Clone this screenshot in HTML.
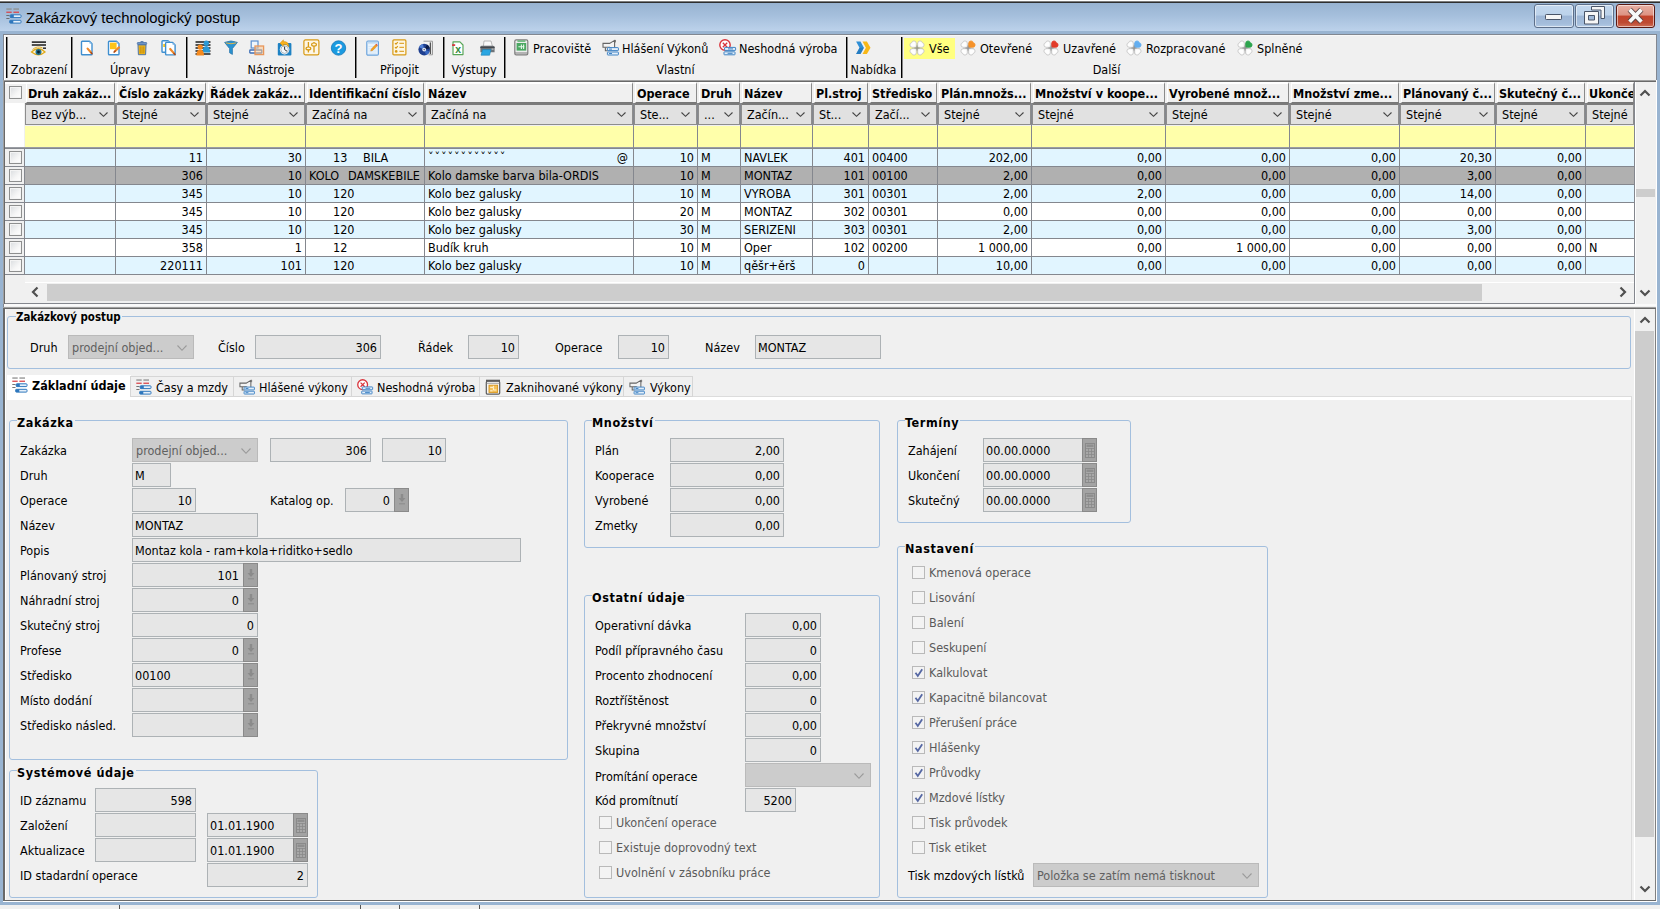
<!DOCTYPE html><html lang="cs"><head><meta charset="utf-8"><title>Zakázkový technologický postup</title><style>
*{box-sizing:border-box;margin:0;padding:0}
html,body{width:1660px;height:909px;overflow:hidden;background:#f0f0f0}
body{position:relative;font-family:"DejaVu Sans Condensed","Liberation Sans",sans-serif;font-size:12.5px;color:#000;line-height:1}
.a{position:absolute}
.t{position:absolute;white-space:nowrap;line-height:16px;height:16px}
.b{font-weight:bold}
.f{position:absolute;background:#e6e6e6;border:1px solid #adb2b5;height:24px;line-height:22px;white-space:nowrap;overflow:hidden;padding:1px 3px 0 2px}
.r{text-align:right}
.cb{position:absolute;background:#cccccc;border:1px solid #bababa;height:24px;line-height:22px;white-space:nowrap;overflow:hidden;padding:1px 4px 0 3px;color:#606060}
.gb{position:absolute;border:1px solid #a3bfde;border-radius:3px}
.gt{position:absolute;white-space:nowrap;font-weight:bold;font-size:12.5px;line-height:16px;background:#f0f0f0;padding:0 1px 0 0;letter-spacing:.6px}
.ck{position:absolute;width:13px;height:13px;background:#f3f3f3;border:1px solid #b9b9b9}
.ckl{position:absolute;white-space:nowrap;line-height:16px;color:#5a5a5a}
.sb{position:absolute;width:15px;height:24px;background:#a3a3a3;border:1px solid #8a8a8a}
.hd{position:absolute;top:82px;height:21px;background:#f0f0f0;border:1px solid;border-top-width:2px;border-color:#fff #8a8a8a #777 #fff;font-weight:bold;font-size:12.5px;line-height:19px;padding:0 0 0 1px;white-space:nowrap;overflow:hidden}
.fl{position:absolute;top:103px;height:22px;background:#e1e1e1;border:1px solid #8d8d8d;border-top:2px solid #7a7a7a;line-height:19px;padding:0 5px;white-space:nowrap;overflow:hidden}
.yl{position:absolute;top:126px;height:21px;background:#ffffaa}
.c{position:absolute;height:17px;line-height:17px;white-space:nowrap;overflow:hidden;padding:0 3px}
.vl{position:absolute;width:1px;background:#84878e}
.hl{position:absolute;height:1px;background:#84878e}
.sep{position:absolute;top:37px;width:1px;height:41px;background:#000;box-shadow:1px 0 0 rgba(0,0,0,.45)}
.tl{position:absolute;white-space:nowrap;line-height:16px;height:16px;top:62px;text-align:center}
.tb{position:absolute;white-space:nowrap;line-height:16px;height:16px;top:41px}
svg{position:absolute;overflow:visible}
</style></head><body>
<div class="a" style="left:0;top:0;width:1660px;height:909px;background:#99b4d1"></div>
<div class="a" style="left:0;top:0;width:1660px;height:1px;background:#fff"></div>
<div class="a" style="left:0;top:1px;width:1660px;height:1px;background:#7c7c7c"></div>
<div class="a" style="left:0;top:2px;width:1660px;height:1px;background:#2e2e2e"></div>
<div class="a" style="left:0;top:3px;width:1660px;height:28px;background:linear-gradient(#98b3d1,#a5bfdc 45%,#bcd2eb)"></div>
<div class="a" style="left:3px;top:34px;width:1654px;height:868px;background:#f0f0f0;border:1px solid #828790;border-bottom:none;border-right-color:#fff"></div>
<div class="a" style="left:4px;top:35px;width:1652px;height:1px;background:#f8f8f8"></div>
<div class="a" style="left:4px;top:35px;width:1px;height:45px;background:#fff"></div>
<div class="a" style="left:1656px;top:34px;width:1px;height:47px;background:#828790"></div>
<div class="a" style="left:0;top:905px;width:1660px;height:4px;background:#f0f0f0"></div>
<div class="a" style="left:119px;top:905px;width:1px;height:4px;background:#555"></div>
<div class="a" style="left:360px;top:905px;width:1px;height:4px;background:#555"></div>
<div class="a" style="left:399px;top:905px;width:1px;height:4px;background:#555"></div>
<div class="a" style="left:479px;top:905px;width:1px;height:4px;background:#555"></div>
<div class="t" style="left:26px;top:9px;font-family:'Liberation Sans',sans-serif;font-size:14.9px;line-height:18px;height:18px">Zakázkový technologický postup</div>
<svg style="left:6px;top:8px" width="16" height="16" viewBox="0 0 16 16"><rect x="0.3" y="0.4" width="5.4" height="1.3" fill="#8f8f8f"/><rect x="7.4" y="0.4" width="5.600" height="1.3" fill="#8f8f8f"/><rect x="0.3" y="3.600" width="5.4" height="1.3" fill="#d9474d"/><rect x="7.4" y="3.600" width="5.600" height="1.3" fill="#d9474d"/><rect x="0.3" y="7.100" width="3.200" height=".9" fill="#666"/><rect x="0.3" y="10.100" width="3.200" height=".9" fill="#666"/><rect x="4.200" y="6.800" width="10.800" height="2.800" rx=".8" fill="#e6f0fa" stroke="#2e77bd" stroke-width="1"/><rect x="4.200" y="6.800" width="3.600" height="2.800" fill="#2e77bd"/><rect x="3.700" y="12.300" width="11.300" height="2.800" rx=".8" fill="#e6f0fa" stroke="#2e77bd" stroke-width="1"/><rect x="3.700" y="12.300" width="3.600" height="2.800" fill="#2e77bd"/></svg>
<div class="a" style="left:1534px;top:4px;width:40px;height:24px;border:1px solid #5d6f8a;border-radius:3px;background:linear-gradient(#c3d7ee 0%,#bcd2ea 46%,#9db6d6 50%,#a4bddb 85%,#b4cbe6 100%);box-shadow:inset 0 0 0 1px rgba(255,255,255,.55)"></div>
<div class="a" style="left:1575px;top:4px;width:39px;height:24px;border:1px solid #5d6f8a;border-radius:3px;background:linear-gradient(#c3d7ee 0%,#bcd2ea 46%,#9db6d6 50%,#a4bddb 85%,#b4cbe6 100%);box-shadow:inset 0 0 0 1px rgba(255,255,255,.55)"></div>
<div class="a" style="left:1616px;top:4px;width:39px;height:24px;border:1px solid #5a1a14;border-radius:3px;background:linear-gradient(#e8b0a4 0%,#dd9383 46%,#c3432b 50%,#bd4a32 80%,#cf6e56 100%);box-shadow:inset 0 0 0 1px rgba(255,255,255,.55)"></div>
<svg style="left:1534px;top:4px" width="39" height="24" viewBox="0 0 39 24"><rect x="11.500" y="10.500" width="16" height="5" rx=".8" fill="#f6f6f6" stroke="#4a5568" stroke-width="1"/></svg>
<svg style="left:1576px;top:4px" width="39" height="24" viewBox="0 0 39 24"><path d="M15.500 2.500h13v12h-3.500v-8.500h-9.500z" fill="#f6f6f6" stroke="#4a5568" stroke-width="1"/><path d="M8.500 7.500h14v12.500h-14zM12.500 11.500v4.500h6v-4.500z" fill="#f6f6f6" fill-rule="evenodd" stroke="#4a5568" stroke-width="1"/></svg>
<svg style="left:1616px;top:4px" width="40" height="24" viewBox="0 0 40 24"><path d="M13.600 5.600L25.400 17.800M25.400 5.600L13.600 17.800" stroke="#5a4040" stroke-width="5.600" stroke-linecap="butt"/><path d="M13.600 5.600L25.400 17.800M25.400 5.600L13.600 17.800" stroke="#f8f8f8" stroke-width="3.800" stroke-linecap="butt"/></svg>
<div class="sep" style="left:6px"></div>
<div class="sep" style="left:71px"></div>
<div class="sep" style="left:186px"></div>
<div class="sep" style="left:355px"></div>
<div class="sep" style="left:443px"></div>
<div class="sep" style="left:504px"></div>
<div class="sep" style="left:846px"></div>
<div class="sep" style="left:901px"></div>
<svg style="left:31px;top:40.7px" width="16" height="16" viewBox="0 0 16 16"><rect x="0.800" y="0.400" width="14.200" height="1.400" fill="#0c0c0c"/><rect x="0.800" y="3.300" width="14.200" height="1.400" fill="#0c0c0c"/><rect x="12" y="6.500" width="3" height="1.300" fill="#0c0c0c"/><path d="M0.500 11 Q7.500 4.500 14 11 Q7.500 16.500 0.500 11Z" fill="#fff6d8" stroke="#e0aa1a" stroke-width="1.300"/><path d="M1.500 8.500Q6 4.500 11.500 6.800" fill="none" stroke="#e0aa1a" stroke-width=".9"/><circle cx="7.5" cy="11" r="3" fill="#1f6f8f"/><circle cx="7.5" cy="11" r="1.4" fill="#0b2230"/></svg>
<div class="tl" style="left:-6.0px;width:90px">Zobrazení</div>
<svg style="left:80px;top:40px" width="16" height="16" viewBox="0 0 16 16"><path d="M2.3 1.2h7.2l2.500 2.500v10.2q0 .8 -.8 .8h-8.9q-.8 0 -.8 -.8v-11.9q0 -.8 .8 -.8z" fill="#fff" stroke="#3f8fd0" stroke-width="1.400" stroke-linejoin="round"/><path d="M9.5 1.2v2.500h2.500z" fill="#8fc0ea"/><path d="M7.6 8.6l3.4 3.9" stroke="#f0892b" stroke-width="2.200" stroke-linecap="round"/><path d="M11.0 12.5l1.05 1.21" stroke="#a8481a" stroke-width="1.500" stroke-linecap="round"/></svg>
<svg style="left:107px;top:40px" width="16" height="16" viewBox="0 0 16 16"><path d="M2.3 1.2h7.2l2.500 2.500v10.2q0 .8 -.8 .8h-8.9q-.8 0 -.8 -.8v-11.9q0 -.8 .8 -.8z" fill="#fff" stroke="#3f8fd0" stroke-width="1.400" stroke-linejoin="round"/><path d="M9.5 1.2v2.500h2.500z" fill="#8fc0ea"/><path d="M3 2.600h6.600v6.600h-6.600z" fill="#fcc419"/><path d="M12 7.4l-3.8 3.6" stroke="#f0892b" stroke-width="2.200" stroke-linecap="round"/><path d="M8.2 11.0l-1.16 1.10" stroke="#a8481a" stroke-width="1.500" stroke-linecap="round"/></svg>
<svg style="left:135px;top:40px" width="16" height="16" viewBox="0 0 16 16"><path d="M5.500 2.400 Q7 .600 8.500 2.400" fill="none" stroke="#4d74a8" stroke-width="1.200"/><rect x="2.300" y="2.500" width="9.400" height="2" rx=".6" fill="#6f93c4" stroke="#4d74a8" stroke-width=".8"/><path d="M3 4.900h8l-.4 9.800h-7.200z" fill="#f3b91f" stroke="#4d74a8" stroke-width="1"/><path d="M5.200 6.400v7M7 6.400v7M8.800 6.400v7" stroke="#c08a0a" stroke-width=".9"/></svg>
<svg style="left:161px;top:40px" width="16" height="16" viewBox="0 0 16 16"><path d="M1.8 0.8h5.2l2.500 2.500v8.2q0 .8 -.8 .8h-6.9q-.8 0 -.8 -.8v-9.9q0 -.8 .8 -.8z" fill="#fff" stroke="#3f8fd0" stroke-width="1.400" stroke-linejoin="round"/><path d="M7.0 0.8v2.500h2.500z" fill="#8fc0ea"/><rect x="2.2" y="4" width="2.4" height="3" fill="#fcc419"/><path d="M5.3999999999999995 2.4h6.2l2.500 2.500v9.2q0 .8 -.8 .8h-7.9q-.8 0 -.8 -.8v-10.9q0 -.8 .8 -.8z" fill="#fff" stroke="#3f8fd0" stroke-width="1.400" stroke-linejoin="round"/><path d="M11.6 2.4v2.500h2.500z" fill="#8fc0ea"/><path d="M9.2 9l3.8 4.4" stroke="#f0892b" stroke-width="2.200" stroke-linecap="round"/><path d="M13.0 13.4l1.05 1.21" stroke="#a8481a" stroke-width="1.500" stroke-linecap="round"/></svg>
<div class="tl" style="left:85.0px;width:90px">Úpravy</div>
<svg style="left:195px;top:40px" width="17" height="16" viewBox="0 0 17 16"><path d="M0.5 2h15M0.5 5h15M0.5 8h15M0.5 11h15M0.5 14h15" stroke="#1e1e1e" stroke-width="1.4"/><circle cx="11.3" cy="3.2" r="2.6" fill="#2b9ad6"/><path d="M7.6 12.5 Q7.6 6 11.3 6 Q15 6 15 12.5z" fill="#2b9ad6"/><circle cx="5.2" cy="7" r="2.6" fill="#f58a1f"/><path d="M1.4 15.6 Q1.4 9.6 5.2 9.6 Q9 9.6 9 15.6z" fill="#f58a1f"/></svg>
<svg style="left:224px;top:40px" width="14" height="16" viewBox="0 0 14 16"><path d="M0.6 2.4 Q7 -0.6 13.4 2.4 L8.4 8.6 V14.4 L5.6 12.8 V8.6z" fill="#2b93d1" stroke="#1c6fa6" stroke-width=".7"/><path d="M1.8 2.9 Q7 4.6 12.2 2.9" fill="none" stroke="#e2b44a" stroke-width="1"/></svg>
<svg style="left:249px;top:40px" width="16" height="16" viewBox="0 0 16 16"><rect x="2.2" y="1" width="6.8" height="7" fill="#eef5fc" stroke="#5b8fd0" stroke-width="1.2"/><rect x="0.8" y="10" width="12" height="3" rx=".6" fill="#fff" stroke="#3d6fb6" stroke-width="1.3"/><rect x="6" y="6" width="8.6" height="8.6" fill="rgba(250,200,150,.55)" stroke="#e8965a" stroke-width="1.3"/></svg>
<svg style="left:277px;top:39px" width="16" height="17" viewBox="0 0 16 17"><rect x="0.8" y="4" width="13.6" height="12.4" rx="1" fill="#1e82c4"/><circle cx="7.6" cy="10.6" r="4.8" fill="#fff"/><circle cx="7.6" cy="10.6" r="3.8" fill="#f4f8fb" stroke="#7a8a96" stroke-width=".6"/><path d="M7.6 10.6V7.6M7.6 10.6l2.4 1.6" stroke="#333" stroke-width="1"/><path d="M6.4 0.8l-3.4 3.4l3.4 3v-1.8q3.6 -.4 5.4 2.6q.2 -5.6 -5.4 -5.4z" fill="#f9b21c" stroke="#d48806" stroke-width=".5"/></svg>
<svg style="left:303px;top:39px" width="17" height="17" viewBox="0 0 17 17"><rect x="0.9" y="0.9" width="15" height="15" rx="1.6" fill="#fdf6e6" stroke="#d79a14" stroke-width="1.2"/><path d="M5.4 3v10.6M11 3v10.6" stroke="#d79a14" stroke-width="1.3"/><ellipse cx="5.4" cy="9.4" rx="2.4" ry="1.4" fill="#fdf6e6" stroke="#d79a14" stroke-width="1.2"/><ellipse cx="11" cy="5.6" rx="2.4" ry="1.6" fill="#fdf6e6" stroke="#d79a14" stroke-width="1.2"/></svg>
<svg style="left:331px;top:40px" width="16" height="16" viewBox="0 0 16 16"><circle cx="7.500" cy="8" r="7.200" fill="#1b9ae0"/><circle cx="7.500" cy="8" r="7.200" fill="none" stroke="#1576b8" stroke-width=".8"/><text x="7.600" y="12.600" text-anchor="middle" font-family="Liberation Sans,sans-serif" font-weight="bold" font-size="13" fill="#fff">?</text></svg>
<div class="tl" style="left:226.0px;width:90px">Nástroje</div>
<svg style="left:366px;top:40px" width="14" height="16" viewBox="0 0 14 16"><rect x="0.8" y="1.2" width="11.6" height="14" rx="1.2" fill="#e9f3fc" stroke="#6aa2dc" stroke-width="1.2"/><rect x="1.4" y="1.6" width="10.4" height="2" fill="#bfd9f2"/><path d="M2.5 6.5h8M2.5 8.8h8M2.5 11h8M2.5 13.2h8" stroke="#cfe2f5" stroke-width=".8"/><path d="M9.600 4.600l1.500 1.500l-4.400 4.400l-2 .600l.600 -2z" fill="#f6a21e" stroke="#c8741a" stroke-width=".4"/><path d="M9.600 4.600l1.500 1.500l.8 -.8l-1.500 -1.500z" fill="#e24c3c"/></svg>
<svg style="left:392px;top:39px" width="15" height="17" viewBox="0 0 15 17"><rect x="0.9" y="0.9" width="13" height="15" rx="1" fill="#fdf6e4" stroke="#d79a14" stroke-width="1.2"/><path d="M3 4.2l1 1l1.8 -2M3 8.2l1 1l1.8 -2" fill="none" stroke="#d79a14" stroke-width="1.2"/><circle cx="4.2" cy="12.4" r="1.3" fill="#d79a14"/><path d="M7.4 4.4h4.6M7.4 8.4h4.6M7.4 12.4h4.6" stroke="#dfa93a" stroke-width="1.4"/></svg>
<svg style="left:418px;top:40px" width="16" height="16" viewBox="0 0 16 16"><path d="M5.5 1.2h9v13.6h-4" fill="#f4f4f4" stroke="#9a9a9a" stroke-width="1"/><path d="M12.4 2.4v11.6" stroke="#555" stroke-width="1.4"/><circle cx="6.2" cy="9.6" r="5.8" fill="#1f3f8f"/><path d="M6.2 9.6L1 7.2A5.8 5.8 0 0 1 5 4z" fill="#4f7fd6"/><path d="M6.2 9.6L11.6 11.6A5.8 5.8 0 0 1 8 15z" fill="#3767c2"/><path d="M6.2 9.6L9 4.6A5.8 5.8 0 0 1 11.9 8.6z" fill="#0b1c4a"/><circle cx="6.2" cy="9.6" r="1.9" fill="#e9edf5"/><circle cx="6.2" cy="9.6" r=".8" fill="#5a6a8a"/></svg>
<div class="tl" style="left:354.5px;width:90px">Připojit</div>
<svg style="left:452px;top:41.3px" width="12" height="14.5" viewBox="0 0 13 16"><path d="M1 1h7.600l3.400 3.400v10.600h-11z" fill="#fff" stroke="#56a556" stroke-width="1.300" stroke-linejoin="round"/><rect x="0" y="3.600" width="3.400" height="1.800" fill="#d8282f"/><text x="6.600" y="13.600" text-anchor="middle" font-family="Liberation Sans,sans-serif" font-weight="bold" font-size="11.500" fill="#2f8a3a">x</text></svg>
<svg style="left:479px;top:40px" width="17" height="16" viewBox="0 0 17 16"><path d="M5 1h7l1.4 5.4h-9z" fill="#fafafa" stroke="#a8a8a8" stroke-width=".8"/><path d="M1.4 7.2q0 -1.4 1.4 -1.4h11.2q1.6 0 1.6 1.6v4.8h-14.2z" fill="#6f7479"/><path d="M1.4 7.4h14.2" stroke="#44494d" stroke-width="1.4"/><path d="M3.6 9.6h8.4l-1.4 5.6h-8.6z" fill="#2aa6e2" stroke="#1c7fb2" stroke-width=".6"/><rect x="12.6" y="8.6" width="2" height="1" fill="#c9ced2"/></svg>
<div class="tl" style="left:429.0px;width:90px">Výstupy</div>
<svg style="left:514px;top:39px" width="15" height="17" viewBox="0 0 15 17"><rect x="0.8" y="0.8" width="13" height="15" rx="1.4" fill="#ececec" stroke="#7d7d7d" stroke-width="1.2"/><path d="M1 14h12.6" stroke="#7d7d7d" stroke-width="1"/><rect x="3.4" y="1.4" width="8" height="1.4" fill="#5ab46e"/><rect x="2.6" y="4" width="9.6" height="7.6" fill="#4aa862"/><path d="M4.4 7.8h6M7.4 5.6v4.4M9.6 5.6v4.4" stroke="#e6f5ea" stroke-width="1.1"/></svg>
<div class="tb" style="left:533px">Pracoviště</div>
<svg style="left:602px;top:39px" width="17" height="17" viewBox="0 0 17 17"><path d="M1 4.400h6.600l5 -3v9.400l-5 -2.600h-6.600z" fill="#f4f4f4" stroke="#666" stroke-width="1.100"/><path d="M3.400 8.400v3.400h2.600" fill="none" stroke="#666" stroke-width="1.100"/><path d="M13.400 1v2.400" stroke="#666" stroke-width=".9"/><rect x="5.4" y="8.6" width="11" height="3" rx=".5" fill="#e4effa" stroke="#3f83c4" stroke-width="1"/><rect x="5.4" y="13" width="11" height="3" rx=".5" fill="#e4effa" stroke="#3f83c4" stroke-width="1"/><path d="M7 10.1h3M7 14.5h3" stroke="#3f83c4" stroke-width="1"/></svg>
<div class="tb" style="left:622px">Hlášení Výkonů</div>
<svg style="left:719px;top:39px" width="17" height="17" viewBox="0 0 17 17"><circle cx="6" cy="6" r="5.200" fill="#fff" stroke="#d9343c" stroke-width="1.400"/><path d="M3.800 3.800l4.400 4.400M8.200 3.800l-4.400 4.400" stroke="#d9343c" stroke-width="1.300"/><rect x="5.6" y="8.4" width="11" height="3" rx=".5" fill="#e4effa" stroke="#3f83c4" stroke-width="1"/><rect x="5" y="12.8" width="11" height="3" rx=".5" fill="#e4effa" stroke="#3f83c4" stroke-width="1"/><path d="M9 9.9h5M8.6 14.3h5" stroke="#3f83c4" stroke-width="1"/></svg>
<div class="tb" style="left:739px">Neshodná výroba</div>
<div class="tl" style="left:630.5px;width:90px">Vlastní</div>
<svg style="left:855px;top:41px" width="17" height="14" viewBox="0 0 16 14"><path d="M0.6 0.6h4.4l3.4 6.2l-3.4 6.2h-4.4l3.4 -6.2z" fill="#2f8fd6"/><path d="M0.6 6.8h3.4l-3.4 6.2h4.4l3.4 -6.2z" fill="#1f6fb2" opacity=".55"/><path d="M7 0.6h4.4l3.6 6.2l-3.6 6.2h-4.4l3.4 -6.2z" fill="#f8b818"/></svg>
<div class="tl" style="left:828.5px;width:90px">Nabídka</div>
<div class="a" style="left:904px;top:38px;width:51px;height:21px;background:#ffff80"></div>
<svg style="left:909px;top:40px" width="16" height="16" viewBox="0 0 16 16"><g opacity=".35"><path d="M8.300 3v10.600M3 8.300h10.600" stroke="#555" stroke-width="1"/></g><path d="M7.300 7.300V3.600Q7.300 .900 5 .900Q3.100 .900 2.700 2.700Q.900 3.100 .900 5Q.900 7.300 3.600 7.300z" transform="" fill="#fefefe" stroke="#c2c2c2" stroke-width=".8"/><path d="M7.300 7.300V3.600Q7.300 .900 5 .900Q3.100 .900 2.700 2.700Q.900 3.100 .900 5Q.900 7.300 3.600 7.300z" transform="translate(16,0) scale(-1,1)" fill="#fefefe" stroke="#c2c2c2" stroke-width=".8"/><path d="M7.300 7.300V3.600Q7.300 .900 5 .900Q3.100 .900 2.700 2.700Q.900 3.100 .900 5Q.900 7.300 3.600 7.300z" transform="translate(0,16) scale(1,-1)" fill="#fefefe" stroke="#c2c2c2" stroke-width=".8"/><path d="M7.300 7.300V3.600Q7.300 .900 5 .900Q3.100 .900 2.700 2.700Q.900 3.100 .900 5Q.900 7.300 3.600 7.300z" transform="translate(16,16) scale(-1,-1)" fill="#fefefe" stroke="#c2c2c2" stroke-width=".8"/><path d="M8 5.500v5M5.500 8h5" stroke="#8a8a8a" stroke-width=".9"/></svg>
<div class="tb" style="left:929px">Vše</div>
<svg style="left:960px;top:40px" width="16" height="16" viewBox="0 0 16 16"><g opacity=".35"><path d="M8.300 3v10.600M3 8.300h10.600" stroke="#555" stroke-width="1"/></g><path d="M7.300 7.300V3.600Q7.300 .900 5 .900Q3.100 .900 2.700 2.700Q.900 3.100 .900 5Q.900 7.300 3.600 7.300z" transform="" fill="#fefefe" stroke="#c2c2c2" stroke-width=".8"/><path d="M7.300 7.300V3.600Q7.300 .900 5 .900Q3.100 .900 2.700 2.700Q.900 3.100 .900 5Q.900 7.300 3.600 7.300z" transform="translate(16,0) scale(-1,1)" fill="#f5922a" stroke="#f5922a" stroke-width=".8"/><path d="M7.300 7.300V3.600Q7.300 .900 5 .900Q3.100 .900 2.700 2.700Q.900 3.100 .900 5Q.900 7.300 3.600 7.300z" transform="translate(0,16) scale(1,-1)" fill="#fefefe" stroke="#c2c2c2" stroke-width=".8"/><path d="M7.300 7.300V3.600Q7.300 .900 5 .900Q3.100 .900 2.700 2.700Q.900 3.100 .900 5Q.900 7.300 3.600 7.300z" transform="translate(16,16) scale(-1,-1)" fill="#fefefe" stroke="#c2c2c2" stroke-width=".8"/><path d="M8 5.500v5M5.500 8h5" stroke="#8a8a8a" stroke-width=".9"/></svg>
<div class="tb" style="left:980px">Otevřené</div>
<svg style="left:1043px;top:40px" width="16" height="16" viewBox="0 0 16 16"><g opacity=".35"><path d="M8.300 3v10.600M3 8.300h10.600" stroke="#555" stroke-width="1"/></g><path d="M7.300 7.300V3.600Q7.300 .900 5 .900Q3.100 .900 2.700 2.700Q.900 3.100 .900 5Q.900 7.300 3.600 7.300z" transform="" fill="#fefefe" stroke="#c2c2c2" stroke-width=".8"/><path d="M7.300 7.300V3.600Q7.300 .900 5 .900Q3.100 .900 2.700 2.700Q.900 3.100 .900 5Q.900 7.300 3.600 7.300z" transform="translate(16,0) scale(-1,1)" fill="#e23a28" stroke="#e23a28" stroke-width=".8"/><path d="M7.300 7.300V3.600Q7.300 .900 5 .900Q3.100 .900 2.700 2.700Q.900 3.100 .900 5Q.900 7.300 3.600 7.300z" transform="translate(0,16) scale(1,-1)" fill="#fefefe" stroke="#c2c2c2" stroke-width=".8"/><path d="M7.300 7.300V3.600Q7.300 .900 5 .900Q3.100 .900 2.700 2.700Q.900 3.100 .900 5Q.900 7.300 3.600 7.300z" transform="translate(16,16) scale(-1,-1)" fill="#fefefe" stroke="#c2c2c2" stroke-width=".8"/><path d="M8 5.500v5M5.500 8h5" stroke="#8a8a8a" stroke-width=".9"/></svg>
<div class="tb" style="left:1063px">Uzavřené</div>
<svg style="left:1126px;top:40px" width="16" height="16" viewBox="0 0 16 16"><g opacity=".35"><path d="M8.300 3v10.600M3 8.300h10.600" stroke="#555" stroke-width="1"/></g><path d="M7.300 7.300V3.600Q7.300 .900 5 .900Q3.100 .900 2.700 2.700Q.900 3.100 .900 5Q.900 7.300 3.600 7.300z" transform="" fill="#fefefe" stroke="#c2c2c2" stroke-width=".8"/><path d="M7.300 7.300V3.600Q7.300 .900 5 .900Q3.100 .900 2.700 2.700Q.900 3.100 .900 5Q.900 7.300 3.600 7.300z" transform="translate(16,0) scale(-1,1)" fill="#63aef0" stroke="#63aef0" stroke-width=".8"/><path d="M7.300 7.300V3.600Q7.300 .900 5 .900Q3.100 .900 2.700 2.700Q.900 3.100 .900 5Q.900 7.300 3.600 7.300z" transform="translate(0,16) scale(1,-1)" fill="#fefefe" stroke="#c2c2c2" stroke-width=".8"/><path d="M7.300 7.300V3.600Q7.300 .900 5 .900Q3.100 .900 2.700 2.700Q.900 3.100 .900 5Q.900 7.300 3.600 7.300z" transform="translate(16,16) scale(-1,-1)" fill="#fefefe" stroke="#c2c2c2" stroke-width=".8"/><path d="M8 5.500v5M5.500 8h5" stroke="#8a8a8a" stroke-width=".9"/></svg>
<div class="tb" style="left:1146px">Rozpracované</div>
<svg style="left:1237px;top:40px" width="16" height="16" viewBox="0 0 16 16"><g opacity=".35"><path d="M8.300 3v10.600M3 8.300h10.600" stroke="#555" stroke-width="1"/></g><path d="M7.300 7.300V3.600Q7.300 .900 5 .900Q3.100 .900 2.700 2.700Q.900 3.100 .900 5Q.900 7.300 3.600 7.300z" transform="" fill="#fefefe" stroke="#c2c2c2" stroke-width=".8"/><path d="M7.300 7.300V3.600Q7.300 .900 5 .900Q3.100 .900 2.700 2.700Q.900 3.100 .900 5Q.900 7.300 3.600 7.300z" transform="translate(16,0) scale(-1,1)" fill="#2da44e" stroke="#2da44e" stroke-width=".8"/><path d="M7.300 7.300V3.600Q7.300 .900 5 .900Q3.100 .900 2.700 2.700Q.900 3.100 .900 5Q.900 7.300 3.600 7.300z" transform="translate(0,16) scale(1,-1)" fill="#fefefe" stroke="#c2c2c2" stroke-width=".8"/><path d="M7.300 7.300V3.600Q7.300 .900 5 .900Q3.100 .900 2.700 2.700Q.900 3.100 .900 5Q.900 7.300 3.600 7.300z" transform="translate(16,16) scale(-1,-1)" fill="#fefefe" stroke="#c2c2c2" stroke-width=".8"/><path d="M8 5.500v5M5.500 8h5" stroke="#8a8a8a" stroke-width=".9"/></svg>
<div class="tb" style="left:1257px">Splněné</div>
<div class="tl" style="left:1061.5px;width:90px">Další</div>
<div class="a" style="left:3px;top:80px;width:1653px;height:224px;background:#f0f0f0"></div>
<div class="a" style="left:3px;top:80px;width:1653px;height:1px;background:#a0a0a0"></div>
<div class="a" style="left:4px;top:81px;width:1652px;height:1px;background:#696969"></div>
<div class="a" style="left:3px;top:80px;width:1px;height:224px;background:#a0a0a0"></div>
<div class="a" style="left:4px;top:81px;width:1px;height:223px;background:#696969"></div>
<div class="a" style="left:5px;top:303px;width:1630px;height:1px;background:#84878e"></div>
<div class="a" style="left:1656px;top:80px;width:1px;height:228px;background:#fff"></div>
<div class="a" style="left:5px;top:82px;width:21px;height:2px;background:#fff"></div>
<div class="a" style="left:5px;top:103px;width:19px;height:45px;background:#fff"></div>
<div class="hd" style="left:26px;width:89px">Druh zakáz...</div>
<div class="fl" style="left:25px;width:90px">Bez výb...</div>
<svg style="left:99px;top:112px" width="9" height="5" viewBox="0 0 9 5"><path d="M.5 .5L4.5 4.3L8.5 .5" fill="none" stroke="#444" stroke-width="1.1"/></svg>
<div class="yl" style="left:25px;width:90px"></div>
<div class="hd" style="left:117px;width:89px">Číslo zakázky</div>
<div class="fl" style="left:116px;width:90px">Stejné</div>
<svg style="left:190px;top:112px" width="9" height="5" viewBox="0 0 9 5"><path d="M.5 .5L4.5 4.3L8.5 .5" fill="none" stroke="#444" stroke-width="1.1"/></svg>
<div class="yl" style="left:116px;width:90px"></div>
<div class="hd" style="left:208px;width:97px">Řádek zakáz...</div>
<div class="fl" style="left:207px;width:98px">Stejné</div>
<svg style="left:289px;top:112px" width="9" height="5" viewBox="0 0 9 5"><path d="M.5 .5L4.5 4.3L8.5 .5" fill="none" stroke="#444" stroke-width="1.1"/></svg>
<div class="yl" style="left:207px;width:98px"></div>
<div class="hd" style="left:307px;width:117px">Identifikační číslo</div>
<div class="fl" style="left:306px;width:118px">Začíná na</div>
<svg style="left:408px;top:112px" width="9" height="5" viewBox="0 0 9 5"><path d="M.5 .5L4.5 4.3L8.5 .5" fill="none" stroke="#444" stroke-width="1.1"/></svg>
<div class="yl" style="left:306px;width:118px"></div>
<div class="hd" style="left:426px;width:207px">Název</div>
<div class="fl" style="left:425px;width:208px">Začíná na</div>
<svg style="left:617px;top:112px" width="9" height="5" viewBox="0 0 9 5"><path d="M.5 .5L4.5 4.3L8.5 .5" fill="none" stroke="#444" stroke-width="1.1"/></svg>
<div class="yl" style="left:425px;width:208px"></div>
<div class="hd" style="left:635px;width:62px">Operace</div>
<div class="fl" style="left:634px;width:63px">Ste...</div>
<svg style="left:681px;top:112px" width="9" height="5" viewBox="0 0 9 5"><path d="M.5 .5L4.5 4.3L8.5 .5" fill="none" stroke="#444" stroke-width="1.1"/></svg>
<div class="yl" style="left:634px;width:63px"></div>
<div class="hd" style="left:699px;width:41px">Druh</div>
<div class="fl" style="left:698px;width:42px">...</div>
<svg style="left:724px;top:112px" width="9" height="5" viewBox="0 0 9 5"><path d="M.5 .5L4.5 4.3L8.5 .5" fill="none" stroke="#444" stroke-width="1.1"/></svg>
<div class="yl" style="left:698px;width:42px"></div>
<div class="hd" style="left:742px;width:70px">Název</div>
<div class="fl" style="left:741px;width:71px">Začín...</div>
<svg style="left:796px;top:112px" width="9" height="5" viewBox="0 0 9 5"><path d="M.5 .5L4.5 4.3L8.5 .5" fill="none" stroke="#444" stroke-width="1.1"/></svg>
<div class="yl" style="left:741px;width:71px"></div>
<div class="hd" style="left:814px;width:54px">Pl.stroj</div>
<div class="fl" style="left:813px;width:55px">St...</div>
<svg style="left:852px;top:112px" width="9" height="5" viewBox="0 0 9 5"><path d="M.5 .5L4.5 4.3L8.5 .5" fill="none" stroke="#444" stroke-width="1.1"/></svg>
<div class="yl" style="left:813px;width:55px"></div>
<div class="hd" style="left:870px;width:67px">Středisko</div>
<div class="fl" style="left:869px;width:68px">Začí...</div>
<svg style="left:921px;top:112px" width="9" height="5" viewBox="0 0 9 5"><path d="M.5 .5L4.5 4.3L8.5 .5" fill="none" stroke="#444" stroke-width="1.1"/></svg>
<div class="yl" style="left:869px;width:68px"></div>
<div class="hd" style="left:939px;width:92px">Plán.množs...</div>
<div class="fl" style="left:938px;width:93px">Stejné</div>
<svg style="left:1015px;top:112px" width="9" height="5" viewBox="0 0 9 5"><path d="M.5 .5L4.5 4.3L8.5 .5" fill="none" stroke="#444" stroke-width="1.1"/></svg>
<div class="yl" style="left:938px;width:93px"></div>
<div class="hd" style="left:1033px;width:132px">Množství v koope...</div>
<div class="fl" style="left:1032px;width:133px">Stejné</div>
<svg style="left:1149px;top:112px" width="9" height="5" viewBox="0 0 9 5"><path d="M.5 .5L4.5 4.3L8.5 .5" fill="none" stroke="#444" stroke-width="1.1"/></svg>
<div class="yl" style="left:1032px;width:133px"></div>
<div class="hd" style="left:1167px;width:122px">Vyrobené množ...</div>
<div class="fl" style="left:1166px;width:123px">Stejné</div>
<svg style="left:1273px;top:112px" width="9" height="5" viewBox="0 0 9 5"><path d="M.5 .5L4.5 4.3L8.5 .5" fill="none" stroke="#444" stroke-width="1.1"/></svg>
<div class="yl" style="left:1166px;width:123px"></div>
<div class="hd" style="left:1291px;width:108px">Množství zme...</div>
<div class="fl" style="left:1290px;width:109px">Stejné</div>
<svg style="left:1383px;top:112px" width="9" height="5" viewBox="0 0 9 5"><path d="M.5 .5L4.5 4.3L8.5 .5" fill="none" stroke="#444" stroke-width="1.1"/></svg>
<div class="yl" style="left:1290px;width:109px"></div>
<div class="hd" style="left:1401px;width:94px">Plánovaný č...</div>
<div class="fl" style="left:1400px;width:95px">Stejné</div>
<svg style="left:1479px;top:112px" width="9" height="5" viewBox="0 0 9 5"><path d="M.5 .5L4.5 4.3L8.5 .5" fill="none" stroke="#444" stroke-width="1.1"/></svg>
<div class="yl" style="left:1400px;width:95px"></div>
<div class="hd" style="left:1497px;width:88px">Skutečný č...</div>
<div class="fl" style="left:1496px;width:89px">Stejné</div>
<svg style="left:1569px;top:112px" width="9" height="5" viewBox="0 0 9 5"><path d="M.5 .5L4.5 4.3L8.5 .5" fill="none" stroke="#444" stroke-width="1.1"/></svg>
<div class="yl" style="left:1496px;width:89px"></div>
<div class="hd" style="left:1587px;width:47px">Ukonče</div>
<div class="fl" style="left:1586px;width:48px">Stejné</div>
<div class="yl" style="left:1586px;width:48px"></div>
<div class="a" style="left:25px;top:149px;width:1609px;height:17px;background:#e1f5ff"></div>
<div class="a" style="left:9px;top:151px;width:13px;height:13px;border:1px solid #8e8f8f;background:linear-gradient(135deg,#d9dcdf,#f6f6f6 60%,#fff);box-shadow:inset 0 0 0 1px #f4f4f4"></div>
<div class="c r" style="left:116px;top:149px;width:90px">11</div>
<div class="c r" style="left:207px;top:149px;width:98px">30</div>
<div class="c" style="left:306px;top:149px;width:118px;padding:0"><span class="a" style="left:27px;top:0">13</span><span class="a" style="left:57px;top:0">BILA</span></div>
<div class="c" style="left:425px;top:149px;width:208px"><span class="a" style="left:3px;top:0;letter-spacing:.9px">ˇˇˇˇˇˇˇˇˇˇˇˇ</span><span class="a" style="right:5px;top:0">@</span></div>
<div class="c r" style="left:634px;top:149px;width:63px">10</div>
<div class="c" style="left:698px;top:149px;width:42px">M</div>
<div class="c" style="left:741px;top:149px;width:71px">NAVLEK</div>
<div class="c r" style="left:813px;top:149px;width:55px">401</div>
<div class="c" style="left:869px;top:149px;width:68px">00400</div>
<div class="c r" style="left:938px;top:149px;width:93px">202,00</div>
<div class="c r" style="left:1032px;top:149px;width:133px">0,00</div>
<div class="c r" style="left:1166px;top:149px;width:123px">0,00</div>
<div class="c r" style="left:1290px;top:149px;width:109px">0,00</div>
<div class="c r" style="left:1400px;top:149px;width:95px">20,30</div>
<div class="c r" style="left:1496px;top:149px;width:89px">0,00</div>
<div class="a" style="left:25px;top:167px;width:1609px;height:17px;background:#b0b0b0"></div>
<div class="a" style="left:9px;top:169px;width:13px;height:13px;border:1px solid #8e8f8f;background:linear-gradient(135deg,#d9dcdf,#f6f6f6 60%,#fff);box-shadow:inset 0 0 0 1px #f4f4f4"></div>
<div class="c r" style="left:116px;top:167px;width:90px">306</div>
<div class="c r" style="left:207px;top:167px;width:98px">10</div>
<div class="c" style="left:306px;top:167px;width:118px;padding:0"><span class="a" style="left:3px;top:0">KOLO</span><span class="a" style="left:42px;top:0">DAMSKEBILE</span></div>
<div class="c" style="left:425px;top:167px;width:208px">Kolo damske barva bila-ORDIS</div>
<div class="c r" style="left:634px;top:167px;width:63px">10</div>
<div class="c" style="left:698px;top:167px;width:42px">M</div>
<div class="c" style="left:741px;top:167px;width:71px">MONTAZ</div>
<div class="c r" style="left:813px;top:167px;width:55px">101</div>
<div class="c" style="left:869px;top:167px;width:68px">00100</div>
<div class="c r" style="left:938px;top:167px;width:93px">2,00</div>
<div class="c r" style="left:1032px;top:167px;width:133px">0,00</div>
<div class="c r" style="left:1166px;top:167px;width:123px">0,00</div>
<div class="c r" style="left:1290px;top:167px;width:109px">0,00</div>
<div class="c r" style="left:1400px;top:167px;width:95px">3,00</div>
<div class="c r" style="left:1496px;top:167px;width:89px">0,00</div>
<div class="a" style="left:25px;top:185px;width:1609px;height:17px;background:#e1f5ff"></div>
<div class="a" style="left:9px;top:187px;width:13px;height:13px;border:1px solid #8e8f8f;background:linear-gradient(135deg,#d9dcdf,#f6f6f6 60%,#fff);box-shadow:inset 0 0 0 1px #f4f4f4"></div>
<div class="c r" style="left:116px;top:185px;width:90px">345</div>
<div class="c r" style="left:207px;top:185px;width:98px">10</div>
<div class="c" style="left:306px;top:185px;width:118px;padding:0"><span class="a" style="left:27px;top:0">120</span></div>
<div class="c" style="left:425px;top:185px;width:208px">Kolo bez galusky</div>
<div class="c r" style="left:634px;top:185px;width:63px">10</div>
<div class="c" style="left:698px;top:185px;width:42px">M</div>
<div class="c" style="left:741px;top:185px;width:71px">VYROBA</div>
<div class="c r" style="left:813px;top:185px;width:55px">301</div>
<div class="c" style="left:869px;top:185px;width:68px">00301</div>
<div class="c r" style="left:938px;top:185px;width:93px">2,00</div>
<div class="c r" style="left:1032px;top:185px;width:133px">2,00</div>
<div class="c r" style="left:1166px;top:185px;width:123px">0,00</div>
<div class="c r" style="left:1290px;top:185px;width:109px">0,00</div>
<div class="c r" style="left:1400px;top:185px;width:95px">14,00</div>
<div class="c r" style="left:1496px;top:185px;width:89px">0,00</div>
<div class="a" style="left:25px;top:203px;width:1609px;height:17px;background:#ffffff"></div>
<div class="a" style="left:9px;top:205px;width:13px;height:13px;border:1px solid #8e8f8f;background:linear-gradient(135deg,#d9dcdf,#f6f6f6 60%,#fff);box-shadow:inset 0 0 0 1px #f4f4f4"></div>
<div class="c r" style="left:116px;top:203px;width:90px">345</div>
<div class="c r" style="left:207px;top:203px;width:98px">10</div>
<div class="c" style="left:306px;top:203px;width:118px;padding:0"><span class="a" style="left:27px;top:0">120</span></div>
<div class="c" style="left:425px;top:203px;width:208px">Kolo bez galusky</div>
<div class="c r" style="left:634px;top:203px;width:63px">20</div>
<div class="c" style="left:698px;top:203px;width:42px">M</div>
<div class="c" style="left:741px;top:203px;width:71px">MONTAZ</div>
<div class="c r" style="left:813px;top:203px;width:55px">302</div>
<div class="c" style="left:869px;top:203px;width:68px">00301</div>
<div class="c r" style="left:938px;top:203px;width:93px">0,00</div>
<div class="c r" style="left:1032px;top:203px;width:133px">0,00</div>
<div class="c r" style="left:1166px;top:203px;width:123px">0,00</div>
<div class="c r" style="left:1290px;top:203px;width:109px">0,00</div>
<div class="c r" style="left:1400px;top:203px;width:95px">0,00</div>
<div class="c r" style="left:1496px;top:203px;width:89px">0,00</div>
<div class="a" style="left:25px;top:221px;width:1609px;height:17px;background:#e1f5ff"></div>
<div class="a" style="left:9px;top:223px;width:13px;height:13px;border:1px solid #8e8f8f;background:linear-gradient(135deg,#d9dcdf,#f6f6f6 60%,#fff);box-shadow:inset 0 0 0 1px #f4f4f4"></div>
<div class="c r" style="left:116px;top:221px;width:90px">345</div>
<div class="c r" style="left:207px;top:221px;width:98px">10</div>
<div class="c" style="left:306px;top:221px;width:118px;padding:0"><span class="a" style="left:27px;top:0">120</span></div>
<div class="c" style="left:425px;top:221px;width:208px">Kolo bez galusky</div>
<div class="c r" style="left:634px;top:221px;width:63px">30</div>
<div class="c" style="left:698px;top:221px;width:42px">M</div>
<div class="c" style="left:741px;top:221px;width:71px">SERIZENI</div>
<div class="c r" style="left:813px;top:221px;width:55px">303</div>
<div class="c" style="left:869px;top:221px;width:68px">00301</div>
<div class="c r" style="left:938px;top:221px;width:93px">2,00</div>
<div class="c r" style="left:1032px;top:221px;width:133px">0,00</div>
<div class="c r" style="left:1166px;top:221px;width:123px">0,00</div>
<div class="c r" style="left:1290px;top:221px;width:109px">0,00</div>
<div class="c r" style="left:1400px;top:221px;width:95px">3,00</div>
<div class="c r" style="left:1496px;top:221px;width:89px">0,00</div>
<div class="a" style="left:25px;top:239px;width:1609px;height:17px;background:#ffffff"></div>
<div class="a" style="left:9px;top:241px;width:13px;height:13px;border:1px solid #8e8f8f;background:linear-gradient(135deg,#d9dcdf,#f6f6f6 60%,#fff);box-shadow:inset 0 0 0 1px #f4f4f4"></div>
<div class="c r" style="left:116px;top:239px;width:90px">358</div>
<div class="c r" style="left:207px;top:239px;width:98px">1</div>
<div class="c" style="left:306px;top:239px;width:118px;padding:0"><span class="a" style="left:27px;top:0">12</span></div>
<div class="c" style="left:425px;top:239px;width:208px">Budík kruh</div>
<div class="c r" style="left:634px;top:239px;width:63px">10</div>
<div class="c" style="left:698px;top:239px;width:42px">M</div>
<div class="c" style="left:741px;top:239px;width:71px">Oper</div>
<div class="c r" style="left:813px;top:239px;width:55px">102</div>
<div class="c" style="left:869px;top:239px;width:68px">00200</div>
<div class="c r" style="left:938px;top:239px;width:93px">1 000,00</div>
<div class="c r" style="left:1032px;top:239px;width:133px">0,00</div>
<div class="c r" style="left:1166px;top:239px;width:123px">1 000,00</div>
<div class="c r" style="left:1290px;top:239px;width:109px">0,00</div>
<div class="c r" style="left:1400px;top:239px;width:95px">0,00</div>
<div class="c r" style="left:1496px;top:239px;width:89px">0,00</div>
<div class="c" style="left:1586px;top:239px;width:48px">N</div>
<div class="a" style="left:25px;top:257px;width:1609px;height:17px;background:#e1f5ff"></div>
<div class="a" style="left:9px;top:259px;width:13px;height:13px;border:1px solid #8e8f8f;background:linear-gradient(135deg,#d9dcdf,#f6f6f6 60%,#fff);box-shadow:inset 0 0 0 1px #f4f4f4"></div>
<div class="c r" style="left:116px;top:257px;width:90px">220111</div>
<div class="c r" style="left:207px;top:257px;width:98px">101</div>
<div class="c" style="left:306px;top:257px;width:118px;padding:0"><span class="a" style="left:27px;top:0">120</span></div>
<div class="c" style="left:425px;top:257px;width:208px">Kolo bez galusky</div>
<div class="c r" style="left:634px;top:257px;width:63px">10</div>
<div class="c" style="left:698px;top:257px;width:42px">M</div>
<div class="c" style="left:741px;top:257px;width:71px">qěšr+ěrš</div>
<div class="c r" style="left:813px;top:257px;width:55px">0</div>
<div class="c r" style="left:938px;top:257px;width:93px">10,00</div>
<div class="c r" style="left:1032px;top:257px;width:133px">0,00</div>
<div class="c r" style="left:1166px;top:257px;width:123px">0,00</div>
<div class="c r" style="left:1290px;top:257px;width:109px">0,00</div>
<div class="c r" style="left:1400px;top:257px;width:95px">0,00</div>
<div class="c r" style="left:1496px;top:257px;width:89px">0,00</div>
<div class="hl" style="left:5px;top:148px;width:1629px"></div>
<div class="hl" style="left:5px;top:166px;width:1629px"></div>
<div class="hl" style="left:5px;top:184px;width:1629px"></div>
<div class="hl" style="left:5px;top:202px;width:1629px"></div>
<div class="hl" style="left:5px;top:220px;width:1629px"></div>
<div class="hl" style="left:5px;top:238px;width:1629px"></div>
<div class="hl" style="left:5px;top:256px;width:1629px"></div>
<div class="hl" style="left:5px;top:274px;width:1629px"></div>
<div class="hl" style="left:5px;top:147px;width:1629px;background:#9a9da3"></div>
<div class="vl" style="left:24px;top:148px;height:127px"></div>
<div class="vl" style="left:115px;top:103px;height:172px"></div>
<div class="vl" style="left:206px;top:103px;height:172px"></div>
<div class="vl" style="left:305px;top:103px;height:172px"></div>
<div class="vl" style="left:424px;top:103px;height:172px"></div>
<div class="vl" style="left:633px;top:103px;height:172px"></div>
<div class="vl" style="left:697px;top:103px;height:172px"></div>
<div class="vl" style="left:740px;top:103px;height:172px"></div>
<div class="vl" style="left:812px;top:103px;height:172px"></div>
<div class="vl" style="left:868px;top:103px;height:172px"></div>
<div class="vl" style="left:937px;top:103px;height:172px"></div>
<div class="vl" style="left:1031px;top:103px;height:172px"></div>
<div class="vl" style="left:1165px;top:103px;height:172px"></div>
<div class="vl" style="left:1289px;top:103px;height:172px"></div>
<div class="vl" style="left:1399px;top:103px;height:172px"></div>
<div class="vl" style="left:1495px;top:103px;height:172px"></div>
<div class="vl" style="left:1585px;top:103px;height:172px"></div>
<div class="vl" style="left:1634px;top:82px;height:222px"></div>
<div class="a" style="left:9px;top:86px;width:13px;height:13px;border:1px solid #8e8f8f;background:linear-gradient(135deg,#d9dcdf,#f6f6f6 60%,#fff);box-shadow:inset 0 0 0 1px #f4f4f4"></div>
<div class="a" style="left:25px;top:275px;width:1609px;height:7px;background:#f3f3f3"></div>
<div class="a" style="left:25px;top:282px;width:1609px;height:1px;background:#fff"></div>
<div class="a" style="left:25px;top:283px;width:1609px;height:19px;background:#f0f0f0"></div>
<div class="a" style="left:47px;top:284px;width:1435px;height:17px;background:#cdcdcd"></div>
<svg style="left:27px;top:284px" width="16" height="16" viewBox="-8 -8 16 16"><path d="M2.500 -4.500L-2 0L2.500 4.500" fill="none" stroke="#505050" stroke-width="2.2"/></svg>
<svg style="left:1615px;top:284px" width="16" height="16" viewBox="-8 -8 16 16"><path d="M-2.500 -4.500L2 0L-2.500 4.500" fill="none" stroke="#505050" stroke-width="2.2"/></svg>
<div class="a" style="left:1635px;top:82px;width:21px;height:222px;background:#f0f0f0"></div>
<div class="a" style="left:1635px;top:82px;width:1px;height:222px;background:#fff"></div>
<div class="a" style="left:1636px;top:189px;width:19px;height:8px;background:#cdcdcd"></div>
<svg style="left:1637px;top:85px" width="16" height="16" viewBox="-8 -8 16 16"><path d="M-4.500 2.500L0 -2L4.500 2.500" fill="none" stroke="#505050" stroke-width="2.2"/></svg>
<svg style="left:1637px;top:285px" width="16" height="16" viewBox="-8 -8 16 16"><path d="M-4.500 -2.500L0 2L4.500 -2.500" fill="none" stroke="#505050" stroke-width="2.2"/></svg>
<div class="a" style="left:4px;top:304px;width:1652px;height:2px;background:#fafafa"></div>
<div class="a" style="left:3px;top:307px;width:1653px;height:1px;background:#a0a0a0"></div>
<div class="a" style="left:3px;top:308px;width:1653px;height:1px;background:#696969"></div>
<div class="a" style="left:3px;top:308px;width:2px;height:593px;background:#696969"></div>
<div class="a" style="left:5px;top:309px;width:1px;height:591px;background:#fff"></div>
<div class="a" style="left:1655px;top:309px;width:1px;height:592px;background:#808080"></div>
<div class="a" style="left:1656px;top:309px;width:1px;height:593px;background:#fff"></div>
<div class="a" style="left:3px;top:900px;width:1653px;height:1px;background:#696969"></div>
<div class="a" style="left:3px;top:901px;width:1654px;height:1px;background:#fff"></div>
<div class="a" style="left:1635px;top:309px;width:20px;height:591px;background:#f0f0f0"></div>
<div class="a" style="left:1635px;top:331px;width:19px;height:506px;background:#cdcdcd"></div>
<svg style="left:1637px;top:312px" width="16" height="16" viewBox="-8 -8 16 16"><path d="M-4.500 2.500L0 -2L4.500 2.500" fill="none" stroke="#505050" stroke-width="2.2"/></svg>
<svg style="left:1637px;top:881px" width="16" height="16" viewBox="-8 -8 16 16"><path d="M-4.500 -2.500L0 2L4.500 -2.500" fill="none" stroke="#505050" stroke-width="2.2"/></svg>
<div class="gb" style="left:7px;top:316px;width:1624px;height:53px"></div>
<div class="gt" style="left:16px;top:309px;font-size:11.4px;letter-spacing:0">Zakázkový postup</div>
<div class="t" style="left:30px;top:340px">Druh</div>
<div class="cb" style="left:68px;top:335px;width:126px">prodejní objed...</div>
<svg style="left:177px;top:345px" width="10" height="6" viewBox="0 0 10 6"><path d="M.5 .5L5.0 5.3L9.5 .5" fill="none" stroke="#9a9a9a" stroke-width="1.1"/></svg>
<div class="t" style="left:218px;top:340px">Číslo</div>
<div class="f r" style="left:255px;top:335px;width:126px">306</div>
<div class="t" style="left:418px;top:340px">Řádek</div>
<div class="f r" style="left:468px;top:335px;width:51px">10</div>
<div class="t" style="left:555px;top:340px">Operace</div>
<div class="f r" style="left:618px;top:335px;width:51px">10</div>
<div class="t" style="left:705px;top:340px">Název</div>
<div class="f" style="left:755px;top:335px;width:126px">MONTAZ</div>
<div class="a" style="left:7px;top:397px;width:1624px;height:3px;background:#fff"></div>
<div class="a" style="left:1631px;top:396px;width:1px;height:504px;background:#dcdcdc"></div>
<div class="a" style="left:693px;top:396px;width:938px;height:1px;background:#dcdcdc"></div>
<div class="a" style="left:1634px;top:309px;width:1px;height:591px;background:#fff"></div>
<div class="a" style="left:7px;top:375px;width:124px;height:25px;background:#fff"></div>
<svg style="left:12px;top:377px" width="16" height="16" viewBox="0 0 16 16"><rect x="0.3" y="0.4" width="5.4" height="1.3" fill="#8f8f8f"/><rect x="7.4" y="0.4" width="5.600" height="1.3" fill="#8f8f8f"/><rect x="0.3" y="3.600" width="5.4" height="1.3" fill="#d9474d"/><rect x="7.4" y="3.600" width="5.600" height="1.3" fill="#d9474d"/><rect x="0.3" y="7.100" width="3.200" height=".9" fill="#666"/><rect x="0.3" y="10.100" width="3.200" height=".9" fill="#666"/><rect x="4.200" y="6.800" width="10.800" height="2.800" rx=".8" fill="#e6f0fa" stroke="#2e77bd" stroke-width="1"/><rect x="4.200" y="6.800" width="3.600" height="2.800" fill="#2e77bd"/><rect x="3.700" y="12.300" width="11.300" height="2.800" rx=".8" fill="#e6f0fa" stroke="#2e77bd" stroke-width="1"/><rect x="3.700" y="12.300" width="3.600" height="2.800" fill="#2e77bd"/></svg>
<div class="t b" style="left:32px;top:378px">Základní údaje</div>
<div class="a" style="left:130px;top:376px;width:104px;height:21px;border:1px solid #d6d6d6;background:#f0f0f0"></div>
<svg style="left:136px;top:379px" width="16" height="16" viewBox="0 0 16 16"><rect x="0.3" y="0.4" width="5.4" height="1.3" fill="#8f8f8f"/><rect x="7.4" y="0.4" width="5.600" height="1.3" fill="#8f8f8f"/><rect x="0.3" y="3.600" width="5.4" height="1.3" fill="#d9474d"/><rect x="7.4" y="3.600" width="5.600" height="1.3" fill="#d9474d"/><rect x="0.3" y="7.100" width="3.200" height=".9" fill="#666"/><rect x="0.3" y="10.100" width="3.200" height=".9" fill="#666"/><rect x="4.200" y="6.800" width="10.800" height="2.800" rx=".8" fill="#e6f0fa" stroke="#2e77bd" stroke-width="1"/><rect x="4.200" y="6.800" width="3.600" height="2.800" fill="#2e77bd"/><rect x="3.700" y="12.300" width="11.300" height="2.800" rx=".8" fill="#e6f0fa" stroke="#2e77bd" stroke-width="1"/><rect x="3.700" y="12.300" width="3.600" height="2.800" fill="#2e77bd"/></svg>
<div class="t" style="left:156px;top:380px">Časy a mzdy</div>
<div class="a" style="left:233px;top:376px;width:119px;height:21px;border:1px solid #d6d6d6;background:#f0f0f0"></div>
<svg style="left:239px;top:379px" width="16" height="16" viewBox="0 0 17 17"><path d="M1 4.400h6.600l5 -3v9.400l-5 -2.600h-6.600z" fill="#f4f4f4" stroke="#666" stroke-width="1.100"/><path d="M3.400 8.400v3.400h2.600" fill="none" stroke="#666" stroke-width="1.100"/><path d="M13.400 1v2.400" stroke="#666" stroke-width=".9"/><rect x="5.4" y="8.6" width="11" height="3" rx=".5" fill="#e4effa" stroke="#3f83c4" stroke-width="1"/><rect x="5.4" y="13" width="11" height="3" rx=".5" fill="#e4effa" stroke="#3f83c4" stroke-width="1"/><path d="M7 10.1h3M7 14.5h3" stroke="#3f83c4" stroke-width="1"/></svg>
<div class="t" style="left:259px;top:380px">Hlášené výkony</div>
<div class="a" style="left:351px;top:376px;width:129px;height:21px;border:1px solid #d6d6d6;background:#f0f0f0"></div>
<svg style="left:357px;top:379px" width="16" height="16" viewBox="0 0 17 17"><circle cx="6" cy="6" r="5.200" fill="#fff" stroke="#d9343c" stroke-width="1.400"/><path d="M3.800 3.800l4.400 4.400M8.200 3.800l-4.400 4.400" stroke="#d9343c" stroke-width="1.300"/><rect x="5.6" y="8.4" width="11" height="3" rx=".5" fill="#e4effa" stroke="#3f83c4" stroke-width="1"/><rect x="5" y="12.8" width="11" height="3" rx=".5" fill="#e4effa" stroke="#3f83c4" stroke-width="1"/><path d="M9 9.9h5M8.6 14.3h5" stroke="#3f83c4" stroke-width="1"/></svg>
<div class="t" style="left:377px;top:380px">Neshodná výroba</div>
<div class="a" style="left:479px;top:376px;width:145px;height:21px;border:1px solid #d6d6d6;background:#f0f0f0"></div>
<svg style="left:485px;top:379px" width="16" height="16" viewBox="0 0 16 16"><rect x="1.300" y="2.200" width="13.400" height="13" rx="1.200" fill="#f6f6f6" stroke="#5a5a5a" stroke-width="1.200"/><path d="M1 1.600h14" stroke="#5a5a5a" stroke-width="1.800"/><path d="M1.600 4.300h12.800" stroke="#8a8a8a" stroke-width=".8"/><rect x="4" y="6.200" width="8.600" height="7.200" fill="#f3c15a" stroke="#d8941a" stroke-width=".9"/><path d="M5.200 8.400h3.200v2.600h3M8.400 6.800v1.600M5.200 11.800h2.400" fill="none" stroke="#fff3d6" stroke-width="1"/></svg>
<div class="t" style="left:506px;top:380px">Zaknihované výkony</div>
<div class="a" style="left:623px;top:376px;width:70px;height:21px;border:1px solid #d6d6d6;background:#f0f0f0"></div>
<svg style="left:629px;top:379px" width="16" height="16" viewBox="0 0 17 17"><path d="M1 4.400h6.600l5 -3v9.400l-5 -2.600h-6.600z" fill="#f4f4f4" stroke="#666" stroke-width="1.100"/><path d="M3.400 8.400v3.400h2.600" fill="none" stroke="#666" stroke-width="1.100"/><path d="M13.400 1v2.400" stroke="#666" stroke-width=".9"/><rect x="5.4" y="8.6" width="11" height="3" rx=".5" fill="#e4effa" stroke="#3f83c4" stroke-width="1"/><rect x="5.4" y="13" width="11" height="3" rx=".5" fill="#e4effa" stroke="#3f83c4" stroke-width="1"/><path d="M7 10.1h3M7 14.5h3" stroke="#3f83c4" stroke-width="1"/></svg>
<div class="t" style="left:650px;top:380px">Výkony</div>
<div class="gb" style="left:9px;top:420px;width:559px;height:340px"></div>
<div class="gt" style="left:17px;top:415px;font-size:12.5px">Zakázka</div>
<div class="t" style="left:20px;top:443px">Zakázka</div>
<div class="cb" style="left:132px;top:438px;width:126px">prodejní objed...</div>
<svg style="left:241px;top:448px" width="10" height="6" viewBox="0 0 10 6"><path d="M.5 .5L5.0 5.3L9.5 .5" fill="none" stroke="#9a9a9a" stroke-width="1.1"/></svg>
<div class="f r" style="left:270px;top:438px;width:101px">306</div>
<div class="f r" style="left:382px;top:438px;width:64px">10</div>
<div class="t" style="left:20px;top:468px">Druh</div>
<div class="f" style="left:132px;top:463px;width:39px">M</div>
<div class="t" style="left:20px;top:493px">Operace</div>
<div class="f r" style="left:132px;top:488px;width:64px">10</div>
<div class="t" style="left:270px;top:493px">Katalog op.</div>
<div class="f r" style="left:345px;top:488px;width:64px;padding-right:18px">0</div>
<div class="sb" style="left:394px;top:488px"></div>
<svg style="left:397.5px;top:494px" width="8" height="11" viewBox="0 0 8 11"><path d="M2.800 0h2.400v4h2.300l-3.500 4l-3.500 -4h2.300z" fill="#8b8b8b"/><path d="M1 9.800h6" stroke="#8b8b8b" stroke-width="1"/></svg>
<div class="t" style="left:20px;top:518px">Název</div>
<div class="f" style="left:132px;top:513px;width:126px">MONTAZ</div>
<div class="t" style="left:20px;top:543px">Popis</div>
<div class="f" style="left:132px;top:538px;width:389px">Montaz kola - ram+kola+riditko+sedlo</div>
<div class="t" style="left:20px;top:568px">Plánovaný stroj</div>
<div class="f r" style="left:132px;top:563px;width:126px;padding-right:18px">101</div>
<div class="sb" style="left:243px;top:563px"></div>
<svg style="left:246.5px;top:569px" width="8" height="11" viewBox="0 0 8 11"><path d="M2.800 0h2.400v4h2.300l-3.500 4l-3.500 -4h2.300z" fill="#8b8b8b"/><path d="M1 9.800h6" stroke="#8b8b8b" stroke-width="1"/></svg>
<div class="t" style="left:20px;top:593px">Náhradní stroj</div>
<div class="f r" style="left:132px;top:588px;width:126px;padding-right:18px">0</div>
<div class="sb" style="left:243px;top:588px"></div>
<svg style="left:246.5px;top:594px" width="8" height="11" viewBox="0 0 8 11"><path d="M2.800 0h2.400v4h2.300l-3.500 4l-3.500 -4h2.300z" fill="#8b8b8b"/><path d="M1 9.800h6" stroke="#8b8b8b" stroke-width="1"/></svg>
<div class="t" style="left:20px;top:618px">Skutečný stroj</div>
<div class="f r" style="left:132px;top:613px;width:126px">0</div>
<div class="t" style="left:20px;top:643px">Profese</div>
<div class="f r" style="left:132px;top:638px;width:126px;padding-right:18px">0</div>
<div class="sb" style="left:243px;top:638px"></div>
<svg style="left:246.5px;top:644px" width="8" height="11" viewBox="0 0 8 11"><path d="M2.800 0h2.400v4h2.300l-3.500 4l-3.500 -4h2.300z" fill="#8b8b8b"/><path d="M1 9.800h6" stroke="#8b8b8b" stroke-width="1"/></svg>
<div class="t" style="left:20px;top:668px">Středisko</div>
<div class="f" style="left:132px;top:663px;width:126px;padding-right:18px">00100</div>
<div class="sb" style="left:243px;top:663px"></div>
<svg style="left:246.5px;top:669px" width="8" height="11" viewBox="0 0 8 11"><path d="M2.800 0h2.400v4h2.300l-3.500 4l-3.500 -4h2.300z" fill="#8b8b8b"/><path d="M1 9.800h6" stroke="#8b8b8b" stroke-width="1"/></svg>
<div class="t" style="left:20px;top:693px">Místo dodání</div>
<div class="f" style="left:132px;top:688px;width:126px;padding-right:18px"></div>
<div class="sb" style="left:243px;top:688px"></div>
<svg style="left:246.5px;top:694px" width="8" height="11" viewBox="0 0 8 11"><path d="M2.800 0h2.400v4h2.300l-3.500 4l-3.500 -4h2.300z" fill="#8b8b8b"/><path d="M1 9.800h6" stroke="#8b8b8b" stroke-width="1"/></svg>
<div class="t" style="left:20px;top:718px">Středisko násled.</div>
<div class="f" style="left:132px;top:713px;width:126px;padding-right:18px"></div>
<div class="sb" style="left:243px;top:713px"></div>
<svg style="left:246.5px;top:719px" width="8" height="11" viewBox="0 0 8 11"><path d="M2.800 0h2.400v4h2.300l-3.500 4l-3.500 -4h2.300z" fill="#8b8b8b"/><path d="M1 9.800h6" stroke="#8b8b8b" stroke-width="1"/></svg>
<div class="gb" style="left:9px;top:770px;width:309px;height:128px"></div>
<div class="gt" style="left:17px;top:765px;font-size:12.5px">Systémové údaje</div>
<div class="t" style="left:20px;top:793px">ID záznamu</div>
<div class="f r" style="left:95px;top:788px;width:101px">598</div>
<div class="t" style="left:20px;top:818px">Založení</div>
<div class="f" style="left:95px;top:813px;width:101px"></div>
<div class="f" style="left:207px;top:813px;width:101px;padding-right:18px">01.01.1900</div>
<div class="sb" style="left:293px;top:813px"></div>
<svg style="left:295.5px;top:818px" width="10" height="15" viewBox="0 0 10 15"><rect x=".5" y=".5" width="9" height="14" fill="#a8a8a8" stroke="#8a8a8a"/><rect x="1.500" y="1.500" width="7" height="2.500" fill="#8e8e8e"/><path d="M.5 5.500h9M.5 8.500h9M.5 11.500h9M3.500 5v9.500M6.500 5v9.500" stroke="#8a8a8a" stroke-width=".8"/></svg>
<div class="t" style="left:20px;top:843px">Aktualizace</div>
<div class="f" style="left:95px;top:838px;width:101px"></div>
<div class="f" style="left:207px;top:838px;width:101px;padding-right:18px">01.01.1900</div>
<div class="sb" style="left:293px;top:838px"></div>
<svg style="left:295.5px;top:843px" width="10" height="15" viewBox="0 0 10 15"><rect x=".5" y=".5" width="9" height="14" fill="#a8a8a8" stroke="#8a8a8a"/><rect x="1.500" y="1.500" width="7" height="2.500" fill="#8e8e8e"/><path d="M.5 5.500h9M.5 8.500h9M.5 11.500h9M3.500 5v9.500M6.500 5v9.500" stroke="#8a8a8a" stroke-width=".8"/></svg>
<div class="t" style="left:20px;top:868px">ID stadardní operace</div>
<div class="f r" style="left:207px;top:863px;width:101px">2</div>
<div class="gb" style="left:584px;top:420px;width:296px;height:128px"></div>
<div class="gt" style="left:592px;top:415px;font-size:12.5px">Množství</div>
<div class="t" style="left:595px;top:443px">Plán</div>
<div class="f r" style="left:670px;top:438px;width:114px">2,00</div>
<div class="t" style="left:595px;top:468px">Kooperace</div>
<div class="f r" style="left:670px;top:463px;width:114px">0,00</div>
<div class="t" style="left:595px;top:493px">Vyrobené</div>
<div class="f r" style="left:670px;top:488px;width:114px">0,00</div>
<div class="t" style="left:595px;top:518px">Zmetky</div>
<div class="f r" style="left:670px;top:513px;width:114px">0,00</div>
<div class="gb" style="left:584px;top:595px;width:296px;height:303px"></div>
<div class="gt" style="left:592px;top:590px;font-size:12.5px">Ostatní údaje</div>
<div class="t" style="left:595px;top:618px">Operativní dávka</div>
<div class="f r" style="left:745px;top:613px;width:76px">0,00</div>
<div class="t" style="left:595px;top:643px">Podíl přípravného času</div>
<div class="f r" style="left:745px;top:638px;width:76px">0</div>
<div class="t" style="left:595px;top:668px">Procento zhodnocení</div>
<div class="f r" style="left:745px;top:663px;width:76px">0,00</div>
<div class="t" style="left:595px;top:693px">Roztříštěnost</div>
<div class="f r" style="left:745px;top:688px;width:76px">0</div>
<div class="t" style="left:595px;top:718px">Překryvné množství</div>
<div class="f r" style="left:745px;top:713px;width:76px">0,00</div>
<div class="t" style="left:595px;top:743px">Skupina</div>
<div class="f r" style="left:745px;top:738px;width:76px">0</div>
<div class="t" style="left:595px;top:769px">Promítání operace</div>
<div class="cb" style="left:745px;top:763px;width:126px"></div>
<svg style="left:854px;top:773px" width="10" height="6" viewBox="0 0 10 6"><path d="M.5 .5L5.0 5.3L9.5 .5" fill="none" stroke="#9a9a9a" stroke-width="1.1"/></svg>
<div class="t" style="left:595px;top:793px">Kód promítnutí</div>
<div class="f r" style="left:745px;top:788px;width:51px">5200</div>
<div class="ck" style="left:599px;top:816px"></div>
<div class="ckl" style="left:616px;top:815px">Ukončení operace</div>
<div class="ck" style="left:599px;top:841px"></div>
<div class="ckl" style="left:616px;top:840px">Existuje doprovodný text</div>
<div class="ck" style="left:599px;top:866px"></div>
<div class="ckl" style="left:616px;top:865px">Uvolnění v zásobníku práce</div>
<div class="gb" style="left:897px;top:420px;width:234px;height:103px"></div>
<div class="gt" style="left:905px;top:415px;font-size:12.5px">Termíny</div>
<div class="t" style="left:908px;top:443px">Zahájení</div>
<div class="f" style="left:983px;top:438px;width:114px;padding-right:18px">00.00.0000</div>
<div class="sb" style="left:1082px;top:438px"></div>
<svg style="left:1084.5px;top:443px" width="10" height="15" viewBox="0 0 10 15"><rect x=".5" y=".5" width="9" height="14" fill="#a8a8a8" stroke="#8a8a8a"/><rect x="1.500" y="1.500" width="7" height="2.500" fill="#8e8e8e"/><path d="M.5 5.500h9M.5 8.500h9M.5 11.500h9M3.500 5v9.500M6.500 5v9.500" stroke="#8a8a8a" stroke-width=".8"/></svg>
<div class="t" style="left:908px;top:468px">Ukončení</div>
<div class="f" style="left:983px;top:463px;width:114px;padding-right:18px">00.00.0000</div>
<div class="sb" style="left:1082px;top:463px"></div>
<svg style="left:1084.5px;top:468px" width="10" height="15" viewBox="0 0 10 15"><rect x=".5" y=".5" width="9" height="14" fill="#a8a8a8" stroke="#8a8a8a"/><rect x="1.500" y="1.500" width="7" height="2.500" fill="#8e8e8e"/><path d="M.5 5.500h9M.5 8.500h9M.5 11.500h9M3.500 5v9.500M6.500 5v9.500" stroke="#8a8a8a" stroke-width=".8"/></svg>
<div class="t" style="left:908px;top:493px">Skutečný</div>
<div class="f" style="left:983px;top:488px;width:114px;padding-right:18px">00.00.0000</div>
<div class="sb" style="left:1082px;top:488px"></div>
<svg style="left:1084.5px;top:493px" width="10" height="15" viewBox="0 0 10 15"><rect x=".5" y=".5" width="9" height="14" fill="#a8a8a8" stroke="#8a8a8a"/><rect x="1.500" y="1.500" width="7" height="2.500" fill="#8e8e8e"/><path d="M.5 5.500h9M.5 8.500h9M.5 11.500h9M3.500 5v9.500M6.500 5v9.500" stroke="#8a8a8a" stroke-width=".8"/></svg>
<div class="gb" style="left:897px;top:546px;width:371px;height:352px"></div>
<div class="gt" style="left:905px;top:541px;font-size:12.5px">Nastavení</div>
<div class="ck" style="left:912px;top:566px"></div>
<div class="ckl" style="left:929px;top:565px">Kmenová operace</div>
<div class="ck" style="left:912px;top:591px"></div>
<div class="ckl" style="left:929px;top:590px">Lisování</div>
<div class="ck" style="left:912px;top:616px"></div>
<div class="ckl" style="left:929px;top:615px">Balení</div>
<div class="ck" style="left:912px;top:641px"></div>
<div class="ckl" style="left:929px;top:640px">Seskupení</div>
<div class="ck" style="left:912px;top:666px"></div>
<svg style="left:914px;top:668px" width="10" height="10" viewBox="0 0 10 10"><path d="M1.500 4.800L3.800 8L8.200 1.200" fill="none" stroke="#5567a3" stroke-width="1.800"/></svg>
<div class="ckl" style="left:929px;top:665px">Kalkulovat</div>
<div class="ck" style="left:912px;top:691px"></div>
<svg style="left:914px;top:693px" width="10" height="10" viewBox="0 0 10 10"><path d="M1.500 4.800L3.800 8L8.200 1.200" fill="none" stroke="#5567a3" stroke-width="1.800"/></svg>
<div class="ckl" style="left:929px;top:690px">Kapacitně bilancovat</div>
<div class="ck" style="left:912px;top:716px"></div>
<svg style="left:914px;top:718px" width="10" height="10" viewBox="0 0 10 10"><path d="M1.500 4.800L3.800 8L8.200 1.200" fill="none" stroke="#5567a3" stroke-width="1.800"/></svg>
<div class="ckl" style="left:929px;top:715px">Přerušení práce</div>
<div class="ck" style="left:912px;top:741px"></div>
<svg style="left:914px;top:743px" width="10" height="10" viewBox="0 0 10 10"><path d="M1.500 4.800L3.800 8L8.200 1.200" fill="none" stroke="#5567a3" stroke-width="1.800"/></svg>
<div class="ckl" style="left:929px;top:740px">Hlášenky</div>
<div class="ck" style="left:912px;top:766px"></div>
<svg style="left:914px;top:768px" width="10" height="10" viewBox="0 0 10 10"><path d="M1.500 4.800L3.800 8L8.200 1.200" fill="none" stroke="#5567a3" stroke-width="1.800"/></svg>
<div class="ckl" style="left:929px;top:765px">Průvodky</div>
<div class="ck" style="left:912px;top:791px"></div>
<svg style="left:914px;top:793px" width="10" height="10" viewBox="0 0 10 10"><path d="M1.500 4.800L3.800 8L8.200 1.200" fill="none" stroke="#5567a3" stroke-width="1.800"/></svg>
<div class="ckl" style="left:929px;top:790px">Mzdové lístky</div>
<div class="ck" style="left:912px;top:816px"></div>
<div class="ckl" style="left:929px;top:815px">Tisk průvodek</div>
<div class="ck" style="left:912px;top:841px"></div>
<div class="ckl" style="left:929px;top:840px">Tisk etiket</div>
<div class="t" style="left:908px;top:868px">Tisk mzdových lístků</div>
<div class="cb" style="left:1033px;top:863px;width:226px">Položka se zatím nemá tisknout</div>
<svg style="left:1242px;top:873px" width="10" height="6" viewBox="0 0 10 6"><path d="M.5 .5L5.0 5.3L9.5 .5" fill="none" stroke="#9a9a9a" stroke-width="1.1"/></svg>
</body></html>
